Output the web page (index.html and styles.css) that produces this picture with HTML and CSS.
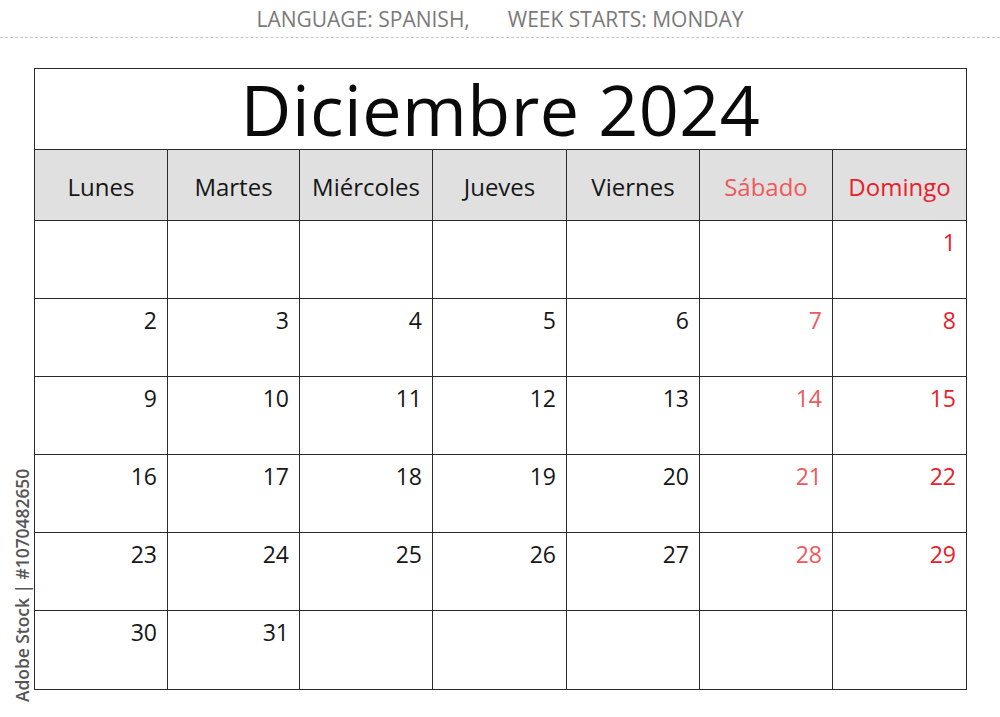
FILE: index.html
```html
<!DOCTYPE html>
<html lang="es">
<head>
<meta charset="utf-8">
<link rel="stylesheet" href="styles.css">
</head>
<body>
<div class="page">
  <div class="meta"><span>LANGUAGE: SPANISH,</span><span>WEEK STARTS: MONDAY</span></div>
  <div class="calendar">
    <div class="title">Diciembre 2024</div>
    <div class="grid">
      <div class="head">Lunes</div>
      <div class="head">Martes</div>
      <div class="head">Miércoles</div>
      <div class="head">Jueves</div>
      <div class="head">Viernes</div>
      <div class="head sat">Sábado</div>
      <div class="head sun">Domingo</div>

      <div class="day"></div><div class="day"></div><div class="day"></div><div class="day"></div><div class="day"></div><div class="day sat"></div><div class="day sun">1</div>
      <div class="day">2</div><div class="day">3</div><div class="day">4</div><div class="day">5</div><div class="day">6</div><div class="day sat">7</div><div class="day sun">8</div>
      <div class="day">9</div><div class="day">10</div><div class="day">11</div><div class="day">12</div><div class="day">13</div><div class="day sat">14</div><div class="day sun">15</div>
      <div class="day">16</div><div class="day">17</div><div class="day">18</div><div class="day">19</div><div class="day">20</div><div class="day sat">21</div><div class="day sun">22</div>
      <div class="day">23</div><div class="day">24</div><div class="day">25</div><div class="day">26</div><div class="day">27</div><div class="day sat">28</div><div class="day sun">29</div>
      <div class="day">30</div><div class="day">31</div><div class="day"></div><div class="day"></div><div class="day"></div><div class="day sat"></div><div class="day sun"></div>
    </div>
  </div>
  <div class="stamp">Adobe Stock | #1070482650</div>
</div>
</body>
</html>
```

FILE: styles.css
```css
html, body {
  margin: 0;
  padding: 0;
  background: #fff;
}
.page {
  position: relative;
  width: 1000px;
  height: 717px;
  overflow: hidden;
  font-family: "Open Sans", "Noto Sans", sans-serif;
  color: #111;
}
.meta {
  display: flex;
  justify-content: center;
  gap: 38px;
  height: 38px;
  box-sizing: border-box;
  padding-top: 5px;
  font-size: 21px;
  line-height: 28px;
  color: #7a7a7a;
  border-bottom: 1px dashed #c8c8c8;
}
.calendar {
  margin: 30px 0 0 34px;
  width: 933px;
  border: 1.5px solid #2a2a2a;
  box-sizing: border-box;
}
.title {
  height: 80px;
  border-bottom: 1.5px solid #2a2a2a;
  text-align: center;
  font-size: 70px;
  line-height: 80px;
  font-weight: 400;
  color: #0a0a0a;
  letter-spacing: 0.5px;
}
.grid {
  display: grid;
  grid-template-columns: 133px 132px 133px 134px 133px 133px 1fr;
  grid-template-rows: 71px repeat(6, 78px);
}
.head, .day {
  border-right: 1.5px solid #2a2a2a;
  border-bottom: 1.5px solid #2a2a2a;
  box-sizing: border-box;
}
.grid > :nth-child(7n) {
  border-right: none;
}
.grid > :nth-last-child(-n+7) {
  border-bottom: none;
}
.head {
  background: #e0e0e0;
  display: flex;
  align-items: center;
  justify-content: center;
  font-size: 24px;
  color: #161616;
  padding-top: 2px;
}
.day {
  text-align: right;
  padding: 5px 10px 0 0;
  font-size: 23px;
  line-height: 32px;
  color: #161616;
}
.sat {
  color: #f0585c;
}
.sun {
  color: #e8202a;
}
.stamp {
  position: absolute;
  left: 11px;
  top: 702px;
  transform-origin: 0 0;
  transform: rotate(-90deg);
  white-space: nowrap;
  font-size: 17.4px;
  font-weight: 600;
  line-height: 22px;
  color: #555;
}
```
